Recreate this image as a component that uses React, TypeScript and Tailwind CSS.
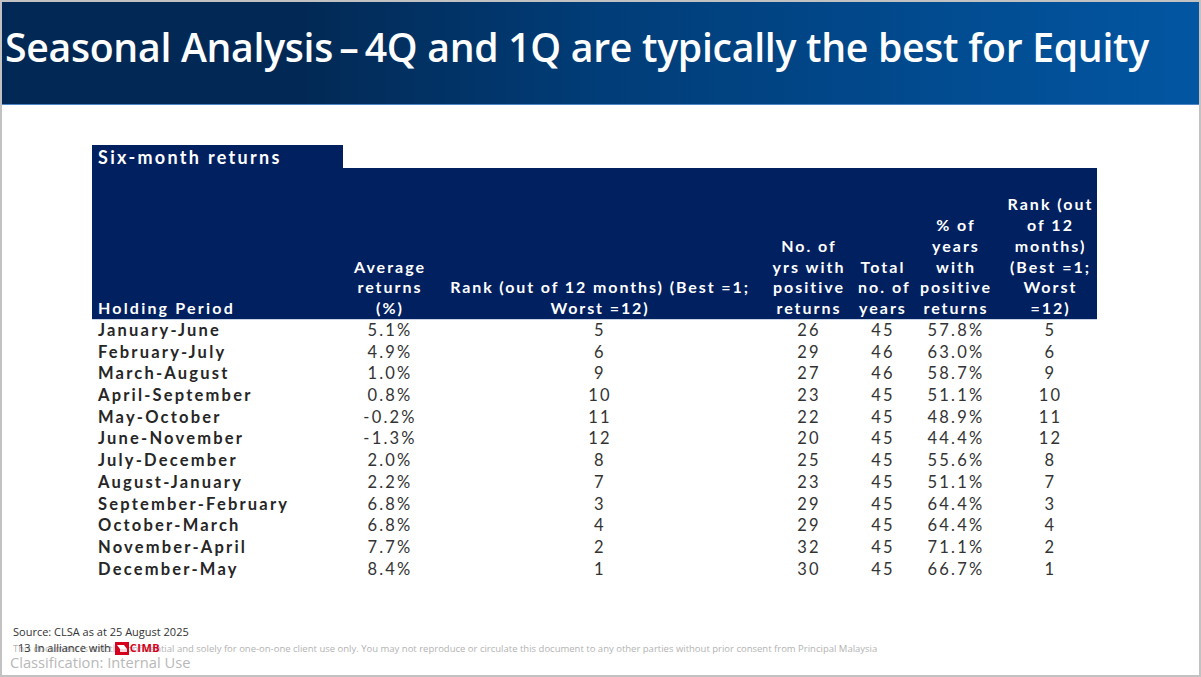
import React from "react";

const rows: [string, string, string, string, string, string, string][] = [
  ["January-June", "5.1%", "5", "26", "45", "57.8%", "5"],
  ["February-July", "4.9%", "6", "29", "46", "63.0%", "6"],
  ["March-August", "1.0%", "9", "27", "46", "58.7%", "9"],
  ["April-September", "0.8%", "10", "23", "45", "51.1%", "10"],
  ["May-October", "-0.2%", "11", "22", "45", "48.9%", "11"],
  ["June-November", "-1.3%", "12", "20", "45", "44.4%", "12"],
  ["July-December", "2.0%", "8", "25", "45", "55.6%", "8"],
  ["August-January", "2.2%", "7", "23", "45", "51.1%", "7"],
  ["September-February", "6.8%", "3", "29", "45", "64.4%", "3"],
  ["October-March", "6.8%", "4", "29", "45", "64.4%", "4"],
  ["November-April", "7.7%", "2", "32", "45", "71.1%", "2"],
  ["December-May", "8.4%", "1", "30", "45", "66.7%", "1"],
];

// column widths follow the pasted Excel table
const cols = "grid grid-cols-[248px_100px_320px_98px_50px_96px_93px]";

function CimbLogo() {
  return (
    <span className="inline-flex items-center gap-[1px]">
      <svg width="14" height="13" viewBox="0 0 14 13">
        <rect x="0" y="0" width="14" height="13" fill="#d6001c" />
        <path d="M2 3 L9 3 L12 7 L5 7 Z" fill="#ffffff" />
        <path d="M5 7 L12 7 L12 10 L5 10 Z" fill="#ffffff" opacity="0.85" />
      </svg>
      <span className="text-[11px] font-bold text-[#d6001c] tracking-[0.5px]">CIMB</span>
    </span>
  );
}

export default function App() {
  return (
    <div className="w-[1201px] h-[677px] bg-[#c2c2c2] p-[2px] overflow-hidden">
      <div className="relative w-full h-full bg-white flex flex-col">
        {/* Title bar */}
        <div className="h-[103px] shrink-0 bg-gradient-to-r from-[#022955] from-25% via-[#013d78] to-[#0256a2] border-b border-[#4d86c8] pl-[3px] pt-[21px]">
          <h1 className="text-white text-[39.2px] font-semibold leading-[48px] tracking-[-0.3px] whitespace-nowrap [font-family:'Open_Sans',sans-serif]">
            Seasonal Analysis{"\u2009–\u2009"}4Q and 1Q are typically the best for Equity
          </h1>
        </div>

        {/* Table */}
        <div className="ml-[90px] mt-[40px] w-[1005px] [font-family:Lato,sans-serif]">
          <div className="w-[251px] h-[23px] bg-[#002060] text-white font-bold text-[18px] leading-[24px] pl-[6px] tracking-[2.3px] whitespace-nowrap">
            Six-month returns
          </div>
          <div className={`${cols} h-[152px] bg-[#002060] text-white font-bold text-[16px] leading-[20.8px] tracking-[2px] items-end border-b border-[#c9d3e6]`}>
            <div className="pl-[6px] tracking-[2.2px] whitespace-nowrap">Holding Period</div>
            <div className="text-center">
              Average
              <br />
              returns
              <br />
              (%)
            </div>
            <div className="text-center whitespace-nowrap tracking-[1.9px]">
              Rank (out of 12 months) (Best =1;
              <br />
              Worst =12)
            </div>
            <div className="text-center whitespace-nowrap">
              No. of
              <br />
              yrs with
              <br />
              positive
              <br />
              returns
            </div>
            <div className="text-center whitespace-nowrap">
              Total
              <br />
              no. of
              <br />
              years
            </div>
            <div className="text-center whitespace-nowrap">
              % of
              <br />
              years
              <br />
              with
              <br />
              positive
              <br />
              returns
            </div>
            <div className="text-center whitespace-nowrap">
              Rank (out
              <br />
              of 12
              <br />
              months)
              <br />
              (Best =1;
              <br />
              Worst
              <br />
              =12)
            </div>
          </div>
          {rows.map((r) => (
            <div key={r[0]} className={`${cols} h-[21.7px] leading-[21.7px] text-[16.5px] text-[#333333] tracking-[2.2px]`}>
              <div className="pl-[6px] font-bold text-[#262626] whitespace-nowrap">{r[0]}</div>
              <div className="text-center">{r[1]}</div>
              <div className="text-center">{r[2]}</div>
              <div className="text-center">{r[3]}</div>
              <div className="text-center">{r[4]}</div>
              <div className="text-center">{r[5]}</div>
              <div className="text-center">{r[6]}</div>
            </div>
          ))}
        </div>

        {/* Footer */}
        <div className="absolute left-[11px] top-[622px] text-[11px] text-[#333333] [font-family:'Open_Sans',sans-serif]">
          Source: CLSA as at 25 August 2025
        </div>
        <div className="absolute left-[11px] top-[640px] text-[9.5px] text-[#b3b3b3] whitespace-nowrap [font-family:'Open_Sans',sans-serif]">
          This document is strictly confidential and solely for one-on-one client use only. You may not reproduce or circulate this document to any other parties without prior consent from Principal Malaysia
        </div>
        <div className="absolute left-[8px] top-[649px] text-[14.7px] text-[#b8b8b8] whitespace-nowrap [font-family:'Open_Sans',sans-serif]">
          Classification: Internal Use
        </div>
        <div className="absolute left-[16px] top-[638px] flex items-center gap-[4px] text-[11px] text-[#333333] whitespace-nowrap [font-family:'Open_Sans',sans-serif]">
          <span>13</span>
          <span>In alliance with</span>
          <CimbLogo />
        </div>
      </div>
    </div>
  );
}
